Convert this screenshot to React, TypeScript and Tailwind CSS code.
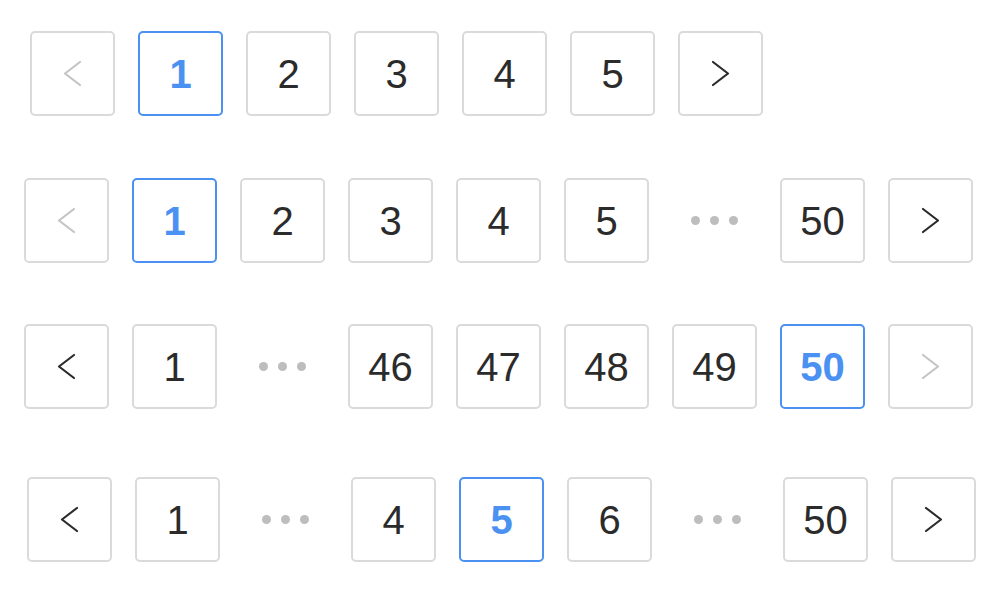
import React from 'react'

type Item = number | 'prev' | 'next' | 'dots'

interface RowSpec {
  items: Item[]
  active: number
  prevDisabled?: boolean
  nextDisabled?: boolean
  className: string
}

const rows: RowSpec[] = [
  { items: ['prev', 1, 2, 3, 4, 5, 'next'], active: 1, prevDisabled: true, className: 'pt-[31px] pl-[30px]' },
  { items: ['prev', 1, 2, 3, 4, 5, 'dots', 50, 'next'], active: 1, prevDisabled: true, className: 'mt-[62px] pl-[24px]' },
  { items: ['prev', 1, 'dots', 46, 47, 48, 49, 50, 'next'], active: 50, nextDisabled: true, className: 'mt-[61px] pl-[24px]' },
  { items: ['prev', 1, 'dots', 4, 5, 6, 'dots', 50, 'next'], active: 5, className: 'mt-[68px] pl-[27px]' },
]

function Chevron({ dir, disabled }: { dir: 'left' | 'right'; disabled?: boolean }) {
  const points = dir === 'left' ? '17,2 2,13.5 17,25' : '2,2 17,13.5 2,25'
  return (
    <svg width="19" height="27" viewBox="0 0 19 27" fill="none">
      <polyline
        points={points}
        stroke={disabled ? '#c4c4c4' : '#2b2b2b'}
        strokeWidth="2.2"
        strokeLinecap="round"
        strokeLinejoin="round"
      />
    </svg>
  )
}

function Dots() {
  return (
    <div className="w-[85px] h-[85px] flex items-center justify-center gap-[10px]">
      <span className="w-[9px] h-[9px] rounded-full bg-[#bdbdbd]" />
      <span className="w-[9px] h-[9px] rounded-full bg-[#bdbdbd]" />
      <span className="w-[9px] h-[9px] rounded-full bg-[#bdbdbd]" />
    </div>
  )
}

function PageRow({ row }: { row: RowSpec }) {
  return (
    <div className={`flex gap-[23px] ${row.className}`}>
      {row.items.map((item, i) => {
        if (item === 'dots') return <Dots key={i} />
        if (item === 'prev' || item === 'next') {
          const disabled = item === 'prev' ? row.prevDisabled : row.nextDisabled
          return (
            <div
              key={i}
              className="w-[85px] h-[85px] rounded-[5px] border-2 border-[#dadada] bg-white flex items-center justify-center"
            >
              <Chevron dir={item === 'prev' ? 'left' : 'right'} disabled={disabled} />
            </div>
          )
        }
        const isActive = item === row.active
        return (
          <div
            key={i}
            className={`w-[85px] h-[85px] rounded-[5px] border-2 bg-white flex items-center justify-center text-[40px] leading-none ${
              isActive ? 'border-[#4b91f1] text-[#4b91f1] font-bold' : 'border-[#dadada] text-[#2b2b2b]'
            }`}
          >
            {item}
          </div>
        )
      })}
    </div>
  )
}

export default function App() {
  return (
    <div className="w-[1006px] h-[598px] bg-white flex flex-col" style={{ fontFamily: '"Liberation Sans", Arial, sans-serif' }}>
      {rows.map((row, i) => (
        <PageRow key={i} row={row} />
      ))}
    </div>
  )
}
